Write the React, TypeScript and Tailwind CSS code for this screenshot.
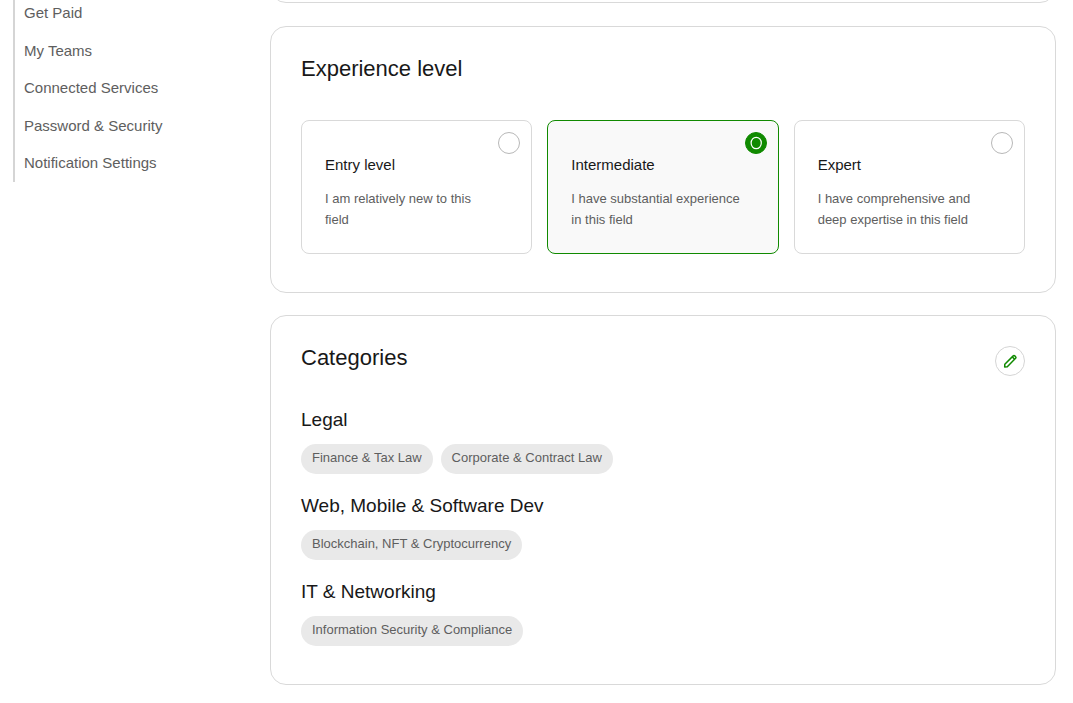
import { useState } from "react";

const navItems = [
  "Get Paid",
  "My Teams",
  "Connected Services",
  "Password & Security",
  "Notification Settings",
];

const levels = [
  { id: "entry", title: "Entry level", text: "I am relatively new to this field" },
  { id: "intermediate", title: "Intermediate", text: "I have substantial experience in this field" },
  { id: "expert", title: "Expert", text: "I have comprehensive and deep expertise in this field" },
];

const categories = [
  { name: "Legal", tags: ["Finance & Tax Law", "Corporate & Contract Law"] },
  { name: "Web, Mobile & Software Dev", tags: ["Blockchain, NFT & Cryptocurrency"] },
  { name: "IT & Networking", tags: ["Information Security & Compliance"] },
];

function PencilIcon() {
  return (
    <svg viewBox="0 0 14 14" className="size-3.5" fill="none" stroke="#108a00" strokeWidth="1.5" strokeLinejoin="round" aria-hidden="true">
      <path d="M1.7 12.9 1.8 10.3 10.2 1.9a1.1 1.1 0 0 1 1.6 0l.8.8a1.1 1.1 0 0 1 0 1.6L4.3 12.7Z" />
      <path d="m9.3 2.9 2.3 2.3" />
    </svg>
  );
}

function Sidebar() {
  return (
    <nav aria-label="Settings" className="w-[257px] shrink-0">
      <ul className="flex flex-col gap-[15px] border-l-2 border-[#d5d5d5] pt-0.5 pb-[7px] pl-[9px]">
        {navItems.map((item) => (
          <li key={item} className="text-[15px] leading-normal text-[#5e5e5e]">
            <a href="#">{item}</a>
          </li>
        ))}
      </ul>
    </nav>
  );
}

function ExperienceLevel() {
  const [selected, setSelected] = useState("intermediate");
  return (
    <section className="rounded-2xl border border-[#d9d9d9] px-[30px] pt-[30px] pb-[38px]">
      <h2 className="text-[22px] leading-6">Experience level</h2>
      <div role="radiogroup" aria-label="Experience level" className="mt-[39px] grid grid-cols-3 gap-[15px]">
        {levels.map((level) => (
          <label
            key={level.id}
            className="flex cursor-pointer flex-col rounded-lg border border-[#d9d9d9] pb-[23px] has-checked:border-[#108a00] has-checked:bg-[#f9f9f9]"
          >
            <span className="mt-[11px] mr-[11px] grid size-[22px] place-items-center self-end">
              <input
                type="radio"
                name="level"
                value={level.id}
                checked={selected === level.id}
                onChange={() => setSelected(level.id)}
                className="col-start-1 row-start-1 size-[22px] appearance-none rounded-full border border-[#b8b8b8] bg-white checked:border-[#108a00] checked:bg-[#108a00]"
              />
              {selected === level.id && (
                <svg viewBox="0 0 12 14" className="pointer-events-none col-start-1 row-start-1 h-3.5 w-3" aria-hidden="true">
                  <ellipse cx="6.2" cy="7" rx="5.1" ry="5.7" fill="none" stroke="#fff" strokeWidth="1.2" />
                </svg>
              )}
            </span>
            <span className="pl-[23px] text-[15px] leading-[22px]">{level.title}</span>
            <span className="mt-3 pr-9 pl-[23px] text-[13px] leading-[21px] text-[#5e5e5e]">{level.text}</span>
          </label>
        ))}
      </div>
    </section>
  );
}

function Categories() {
  return (
    <section className="rounded-2xl border border-[#d9d9d9] px-[30px] pt-[30px] pb-[38px]">
      <div className="flex items-start justify-between">
        <h2 className="text-[22px] leading-6">Categories</h2>
        <button type="button" aria-label="Edit categories" className="flex size-[30px] items-center justify-center rounded-full border border-[#d5d5d5]">
          <PencilIcon />
        </button>
      </div>
      <div className="mt-[30px] flex flex-col gap-[18px]">
        {categories.map((category) => (
          <div key={category.name}>
            <h3 className="text-[19px] leading-7">{category.name}</h3>
            <ul className="mt-2.5 flex flex-wrap gap-2">
              {category.tags.map((tag) => (
                <li key={tag} className="rounded-full bg-[#e9e9e9] px-[11px] pt-[3px] pb-[5px] text-[13px] leading-[22px] text-[#5e5e5e]">
                  {tag}
                </li>
              ))}
            </ul>
          </div>
        ))}
      </div>
    </section>
  );
}

export default function App() {
  return (
    <div className="flex items-start bg-white pr-[17px] pl-[13px] font-['Liberation_Sans',Arial,sans-serif] text-[#181818]">
      <Sidebar />
      <main className="flex min-w-0 flex-1 flex-col gap-[22px]">
        <div className="flex h-1 items-end overflow-hidden pb-px">
          <div className="h-9 flex-1 rounded-2xl border border-[#d9d9d9]" />
        </div>
        <ExperienceLevel />
        <Categories />
      </main>
    </div>
  );
}
